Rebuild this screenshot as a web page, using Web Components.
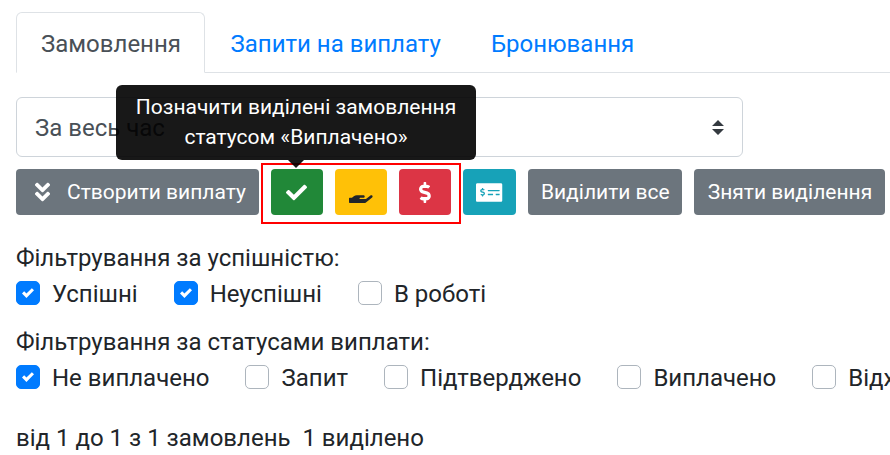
<!DOCTYPE html>
<html><head><meta charset="utf-8"><style>
html,body{margin:0;padding:0;background:#fff;overflow:hidden;width:890px;height:455px}
body{font:24px/30px Roboto,sans-serif;color:#212529}
</style></head><body>
<x-app></x-app>
<script>
const I={
check:['0 0 512 512','M173.898 439.404l-166.4-166.4c-9.997-9.997-9.997-26.206 0-36.204l36.203-36.204c9.997-9.998 26.207-9.998 36.204 0L192 312.69 432.095 72.596c9.997-9.997 26.207-9.997 36.204 0l36.203 36.204c9.997 9.997 9.997 26.206 0 36.204l-294.4 294.401c-9.998 9.997-26.207 9.997-36.204-.001z'],
dbl:['0 0 320 512','M143 256.3L7 120.3c-9.4-9.4-9.4-24.6 0-33.9l22.6-22.6c9.4-9.4 24.6-9.4 33.9 0l96.4 96.4 96.4-96.4c9.4-9.4 24.6-9.4 33.9 0L313 86.3c9.4 9.4 9.4 24.6 0 33.9l-136 136c-9.4 9.5-24.6 9.5-34 .1zm34 192l136-136c9.4-9.4 9.4-24.6 0-33.9l-22.6-22.6c-9.4-9.4-24.6-9.4-33.9 0L160 352.1l-96.4-96.4c-9.4-9.4-24.6-9.4-33.9 0L7 278.3c-9.4 9.4-9.4 24.6 0 33.9l136 136c9.4 9.5 24.6 9.5 34 .1z'],
hand:['0 0 576 512','M565.3 328.1c-11.8-10.7-30.2-10-42.6 0L430.3 402c-11.3 9.1-25.4 14-40 14H272c-8.8 0-16-7.2-16-16s7.2-16 16-16h78.3c15.9 0 30.7-10.9 33.3-26.6 3.3-20-12.1-37.4-31.6-37.4H192c-27 0-53.1 9.3-74.1 26.3L71.4 384H16c-8.8 0-16 7.2-16 16v96c0 8.8 7.2 16 16 16h356.8c14.5 0 28.6-4.9 40-14l151.2-121c15.2-12.2 16.4-35.1 1.3-48.9z'],
dollar:['0 0 288 512','M209.2 233.4l-108-31.6C88.7 198.2 80 186.5 80 173.5c0-16.3 13.2-29.5 29.5-29.5h66.3c12.2 0 24.2 3.7 34.2 10.5 6.1 4.1 14.3 3.1 19.5-2l34.8-34c7.1-6.9 6.1-18.4-1.8-24.5C238 74.8 207.4 64.1 176 64V16c0-8.8-7.2-16-16-16h-32c-8.8 0-16 7.2-16 16v48h-2.5C45.8 64-5.4 118.7.5 183.6c4.2 46.1 39.4 83.6 83.8 96.6l102.5 30c12.5 3.7 21.2 15.3 21.2 28.3 0 16.3-13.2 29.5-29.5 29.5h-66.3C100 368 88 364.3 78 357.5c-6.1-4.1-14.3-3.1-19.5 2l-34.8 34c-7.1 6.9-6.1 18.4 1.8 24.5 24.5 19.2 55.1 29.9 86.5 30v48c0 8.8 7.2 16 16 16h32c8.8 0 16-7.2 16-16v-48.2c46.6-.9 90.3-28.6 105.7-72.7 21.5-61.6-14.6-124.8-72.5-141.7z'],
money:['0 0 640 512','M608 32H32C14.33 32 0 46.33 0 64v384c0 17.67 14.33 32 32 32h576c17.67 0 32-14.33 32-32V64c0-17.67-14.33-32-32-32zM176 327.88V344c0 4.42-3.58 8-8 8h-16c-4.42 0-8-3.58-8-8v-16.29c-11.29-.58-22.27-4.52-31.37-11.35-3.9-2.93-4.1-8.77-.57-12.14l11.75-11.21c2.77-2.64 6.89-2.76 10.13-.73 3.87 2.42 8.26 3.72 12.82 3.72h28.11c6.5 0 11.8-5.92 11.8-13.19 0-5.95-3.61-11.19-8.77-12.73l-45-13.5c-18.59-5.58-31.58-23.42-31.58-43.39 0-24.52 19.05-44.44 42.67-45.07V152c0-4.42 3.58-8 8-8h16c4.42 0 8 3.58 8 8v16.29c11.29.58 22.27 4.51 31.37 11.35 3.9 2.93 4.1 8.77.57 12.14l-11.75 11.21c-2.77 2.64-6.89 2.76-10.13.73-3.87-2.43-8.26-3.72-12.82-3.72h-28.11c-6.5 0-11.8 5.92-11.8 13.19 0 5.95 3.61 11.19 8.77 12.73l45 13.5c18.59 5.58 31.58 23.42 31.58 43.39 0 24.53-19.05 44.44-42.67 45.07zM416 312c0 4.42-3.58 8-8 8H296c-4.42 0-8-3.58-8-8v-16c0-4.42 3.58-8 8-8h112c4.42 0 8 3.58 8 8v16zm160 0c0 4.42-3.58 8-8 8h-80c-4.42 0-8-3.58-8-8v-16c0-4.42 3.58-8 8-8h80c4.42 0 8 3.58 8 8v16zm0-96c0 4.42-3.58 8-8 8H296c-4.42 0-8-3.58-8-8v-16c0-4.42 3.58-8 8-8h272c4.42 0 8 3.58 8 8v16z']
};
function svg(n,h){const[v,d]=I[n];const p=v.split(' ');const w=h*p[2]/p[3];return `<svg width="${w}" height="${h}" viewBox="${v}" fill="currentColor" style="display:block"><path d="${d}"/></svg>`}
function def(name,css,html){customElements.define(name,class extends HTMLElement{constructor(){super();this.attachShadow({mode:'open'})}connectedCallback(){this.shadowRoot.innerHTML=`<style>${css}</style>`+(typeof html==='function'?html(this):html);}})}

def('x-tab',`:host{display:block;box-sizing:border-box;height:61px;padding:16px 24px 0;margin-bottom:-1px;border:1px solid transparent;border-radius:6px 6px 0 0;color:#007bff;white-space:nowrap}
:host([active]){color:#495057;background:#fff;border-color:#dee2e6 #dee2e6 #fff;padding-right:23.5px}`,`<slot></slot>`);
def('x-tabs',`:host{display:flex;border-bottom:1px solid #dee2e6;margin-bottom:24px}`,`<slot></slot>`);
def('x-select',`:host{display:flex;align-items:center;justify-content:space-between;box-sizing:border-box;width:727px;height:60px;border:1px solid #ced4da;border-radius:6px;padding:0 18px;color:#495057;background:#fff}
span{padding-top:2px}
svg{display:block}`,`<span><slot></slot></span><svg width="12" height="15" viewBox="0 0 4 5"><path fill="#343a40" d="M2 0L0 2h4zm0 5L0 3h4z"/></svg>`);
def('x-btn',`:host{display:flex;align-items:center;justify-content:center;box-sizing:border-box;height:46px;border-radius:4px;padding:0 13px;font-size:21px;line-height:30px;color:#fff;background:#6c757d;flex:none;white-space:nowrap}
:host([w]){padding:0}
:host([c=g]){background:#218838;width:52px}:host([c=y]){background:#ffc107;color:#212529;width:52px}:host([c=r]){background:#dc3545;width:52px}:host([c=t]){background:#17a2b8;width:53px}`,`<slot></slot>`);
def('x-toolbar',`:host{display:flex;align-items:flex-start;gap:12px;margin-top:12px;width:max-content}
.b{display:flex;gap:12px;box-sizing:border-box;height:61px;margin:-6px -10px 0;padding:4px 8px 0;border:2px solid #f00;}`,`<slot name="a"></slot><div class="b"><slot name="box"></slot></div><slot></slot>`);
def('x-tooltip',`:host{position:absolute;left:116px;top:85px;width:360px;box-sizing:border-box;height:75px;padding:8px 16px;background:#000;opacity:.9;color:#fff;border-radius:6px;font-size:21px;line-height:29.5px;text-align:center}
i{position:absolute;left:172px;top:75px;width:0;height:0;border:8px solid transparent;border-top-color:#000;border-bottom:0}`,`<slot></slot><i></i>`);
def('x-check',`:host{display:flex;align-items:flex-start;gap:12px;white-space:nowrap;flex:none}
b{display:flex;align-items:center;justify-content:center;box-sizing:border-box;width:24px;height:24px;margin-top:2px;border:1px solid #adb5bd;border-radius:5px;background:#fff;flex:none}
:host([on]) b{background:#007bff;border-color:#007bff}
svg{display:block}`,h=>`<b>${h.hasAttribute('on')?'<svg width="12" height="12" viewBox="0 0 8 8"><path fill="#fff" d="M6.564.75l-3.59 3.612-1.538-1.55L0 4.26 2.974 7.25 8 2.193z"/></svg>':''}</b><slot></slot>`);
def('x-checks',`:host{display:flex;height:30px;align-items:flex-start;gap:36px;width:max-content}`,`<slot></slot>`);
def('x-app',`:host{display:block;position:relative;padding:12px 0 0 16px;width:874px;height:443px;overflow:hidden;box-sizing:content-box}
.ic{display:flex;gap:17px;align-items:center}`,()=>`
<x-tabs><x-tab active>Замовлення</x-tab><x-tab>Запити на виплату</x-tab><x-tab>Бронювання</x-tab></x-tabs>
<x-select>За весь час</x-select>
<x-toolbar>
 <x-btn slot="a" style="padding:0 13px 0 19px"><span class="ic">${svg('dbl',24)}<span>Створити виплату</span></span></x-btn>
 <x-btn slot="box" c="g" w>${svg('check',21)}</x-btn>
 <x-btn slot="box" c="y" w>${svg('hand',21)}</x-btn>
 <x-btn slot="box" c="r" w>${svg('dollar',21)}</x-btn>
 <x-btn c="t" w>${svg('money',21)}</x-btn>
 <x-btn style="padding:0 12px 0 13px">Виділити все</x-btn>
 <x-btn style="padding:0 13px 0 14px">Зняти виділення</x-btn>
</x-toolbar>
<div style="height:19px"></div>
<div>Фільтрування за успішністю:</div>
<x-checks style="margin-top:6px"><x-check on>Успішні</x-check><x-check on>Неуспішні</x-check><x-check>В роботі</x-check></x-checks>
<div style="margin-top:18px">Фільтрування за статусами виплати:</div>
<x-checks style="margin-top:6px"><x-check on>Не виплачено</x-check><x-check>Запит</x-check><x-check>Підтверджено</x-check><x-check>Виплачено</x-check><x-check>Відхилено</x-check></x-checks>
<div style="margin-top:30px;white-space:pre">від 1 до 1 з 1 замовлень  1 виділено</div>
<x-tooltip>Позначити виділені замовлення статусом «Виплачено»</x-tooltip>`);
</script>
</body></html>
